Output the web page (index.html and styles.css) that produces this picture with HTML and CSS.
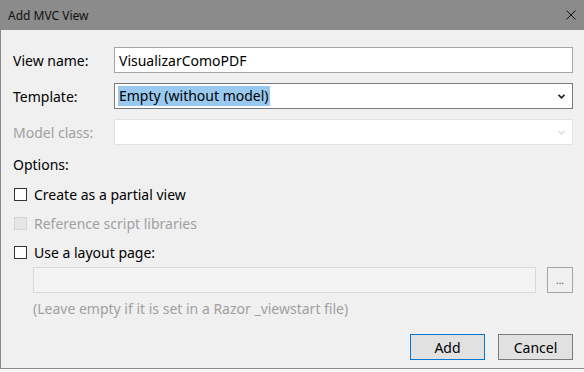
FILE: index.html
```html
<!DOCTYPE html>
<html lang="en">
<head>
    <meta charset="UTF-8">
    <meta name="viewport" content="width=device-width, initial-scale=1.0">
    <title>Add MVC View</title>
    <link rel="stylesheet" href="styles.css">
</head>
<body>
    <div class="dialog">
        <div class="titlebar">
            <span class="title">Add MVC View</span>
            <svg class="close" width="10" height="10" viewBox="0 0 10 10">
                <path d="M0.5 0.5 L9.5 9.5 M9.5 0.5 L0.5 9.5" stroke="#111" stroke-width="1" fill="none"/>
            </svg>
        </div>
        <div class="content">
            <div class="row">
                <label class="label">View name:</label>
                <div class="field">VisualizarComoPDF</div>
            </div>
            <div class="row">
                <label class="label">Template:</label>
                <div class="field select">
                    <span class="selected">Empty (without model)</span>
                    <svg class="chevron" width="7" height="5" viewBox="0 0 7 5">
                        <path d="M0.5 0.8 L3.5 3.8 L6.5 0.8" stroke="#222" stroke-width="1.7" fill="none"/>
                    </svg>
                </div>
            </div>
            <div class="row">
                <label class="label disabled">Model class:</label>
                <div class="field select off">
                    <span></span>
                    <svg class="chevron" width="7" height="5" viewBox="0 0 7 5">
                        <path d="M0.5 0.8 L3.5 3.8 L6.5 0.8" stroke="#d4d4d4" stroke-width="1.2" fill="none"/>
                    </svg>
                </div>
            </div>

            <div class="options">Options:</div>
            <div class="check">
                <span class="box"></span>
                <span>Create as a partial view</span>
            </div>
            <div class="check disabled">
                <span class="box"></span>
                <span>Reference script libraries</span>
            </div>
            <div class="check">
                <span class="box"></span>
                <span>Use a layout page:</span>
            </div>
            <div class="layout-row">
                <div class="field off layout"></div>
                <div class="browse">...</div>
            </div>
            <div class="hint">(Leave empty if it is set in a Razor _viewstart file)</div>

            <div class="buttons">
                <div class="btn default">Add</div>
                <div class="btn">Cancel</div>
            </div>
        </div>
    </div>
</body>
</html>
```

FILE: styles.css
```css
body {
    margin: 0;
    font-family: "Noto Sans", sans-serif;
    background-color: #f8f8f8;
    color: #000;
}

.dialog {
    width: 584px;
    height: 369px;
    box-sizing: border-box;
    border-left: 1px solid #8a8a8a;
    border-bottom: 1px solid #8a8a8a;
    background-color: #f0f0f0;
}

.titlebar {
    height: 30px;
    background-color: #8b8b8b;
    display: flex;
    align-items: center;
    justify-content: space-between;
    padding: 0 8px 0 7px;
}

.title {
    font-size: 12px;
    color: #111;
}

.close {
    display: block;
}

.content {
    padding: 17px 11px 0 12px;
    font-size: 14px;
}

.row {
    display: flex;
    align-items: center;
    height: 26px;
    margin-bottom: 10px;
}

.label {
    width: 101px;
    flex-shrink: 0;
}

.label.disabled {
    color: #a0a0a0;
}

.field {
    flex: 1;
    height: 26px;
    box-sizing: border-box;
    border: 1px solid #a6a6a6;
    background: #fff;
    display: flex;
    align-items: center;
    padding-left: 4px;
}

.field.select {
    border-color: #7a7a7a;
    justify-content: space-between;
    padding: 0 7px 0 3px;
}

.selected {
    background-color: #99c9ef;
    line-height: 20px;
    padding: 0 1px;
}

.field.off {
    border-color: #e3e3e3;
    background: #fff;
}

.chevron {
    display: block;
}

.options {
    margin-top: 8px;
    line-height: 20px;
}

.check {
    display: flex;
    align-items: center;
    height: 20px;
    margin-top: 9px;
}

.box {
    width: 13px;
    height: 13px;
    box-sizing: border-box;
    border: 1px solid #333;
    background: #fff;
    margin: 0 7px 0 1px;
}

.check.disabled {
    color: #a0a0a0;
}

.check.disabled .box {
    border-color: #d5d5d5;
    background: #e6e6e6;
}

.layout-row {
    display: flex;
    margin: 5px 0 0 20px;
    gap: 11px;
}

.field.layout {
    flex: 1;
    background: #f3f3f3;
    border-color: #d9d9d9;
}

.browse {
    width: 26px;
    height: 26px;
    box-sizing: border-box;
    border: 1px solid #a6a6a6;
    background: #f0f0f0;
    font-size: 10px;
    color: #555;
    display: flex;
    align-items: center;
    justify-content: center;
}

.hint {
    margin: 6px 0 0 20px;
    color: #a0a0a0;
    line-height: 20px;
}

.buttons {
    display: flex;
    justify-content: flex-end;
    gap: 13px;
    margin-top: 15px;
}

.btn {
    width: 75px;
    height: 26px;
    box-sizing: border-box;
    border: 1px solid #7a7a7a;
    background: #e1e1e1;
    display: flex;
    align-items: center;
    justify-content: center;
}

.btn.default {
    border-color: #0078d7;
}
```
